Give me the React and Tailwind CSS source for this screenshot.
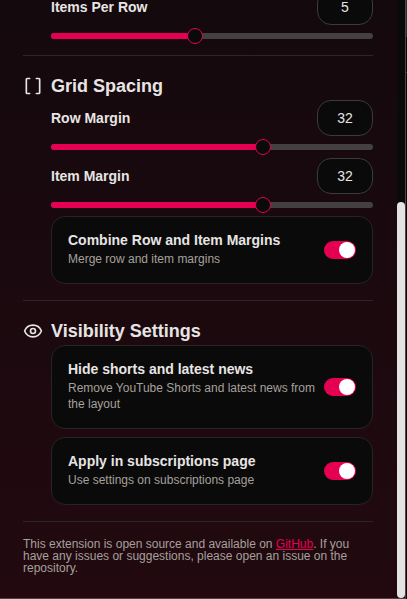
import React from "react";
import { Brackets, Eye } from "lucide-react";

function Separator() {
  return <div className="h-px w-full shrink-0 bg-[#2b2728]" />;
}

function Heading({ icon: Icon, children }) {
  return (
    <div className="flex h-7 items-center gap-2">
      <Icon className="size-5 shrink-0 text-[#e7e5e4]" strokeWidth={2} />
      <h2 className="text-[18px] leading-7 font-bold whitespace-nowrap">{children}</h2>
    </div>
  );
}

function SliderField({ label, value, fill, thumb }) {
  return (
    <div>
      <div className="flex h-9 items-center justify-between">
        <span className="text-[14px] leading-none font-bold">{label}</span>
        <div className="flex h-9 w-14 items-center justify-center rounded-[14px] border border-[#3c3a3a] bg-[#0a0a0a] text-[14px]">
          {value}
        </div>
      </div>
      <div className="relative my-2 h-1.5 rounded-full bg-[#44403f]">
        <div className={`h-full rounded-full bg-[#e60052] ${fill}`} />
        <div className={`absolute -top-[5px] size-4 rounded-full border border-[#e60052] bg-[#0a0a0a] ${thumb}`} />
      </div>
    </div>
  );
}

function ToggleCard({ title, text }) {
  return (
    <div className="flex items-center justify-between gap-2 rounded-[14px] border border-[#262424] bg-[#0a0a0a] p-4">
      <div className="min-w-0 flex-1">
        <div className="mb-1 text-[14px] leading-none font-bold whitespace-nowrap">{title}</div>
        <p className="text-[12px] leading-4 text-[#a6a09b]">{text}</p>
      </div>
      <div className="flex h-[18px] w-8 shrink-0 items-center justify-end rounded-full bg-[#e60052] pr-px">
        <div className="size-4 rounded-full bg-white" />
      </div>
    </div>
  );
}

export default function App() {
  return (
    <div className="flex h-[599px] w-[407px] flex-col overflow-hidden bg-[#0a0a0a] font-['Liberation_Sans',Arial,sans-serif] text-[#e7e5e4]">
      <div className="flex h-[598px] shrink-0">
        <main className="h-full w-[397px] shrink-0 overflow-hidden bg-linear-to-b from-[#14090d] to-[#220910] pr-6 pl-[23px]">
          <div className="-mt-[11px] pl-7">
            <SliderField label="Items Per Row" value="5" fill="w-[144px]" thumb="left-[136px]" />
          </div>
          <div className="mt-4">
            <Separator />
          </div>
          <section className="py-4">
            <Heading icon={Brackets}>Grid Spacing</Heading>
            <div className="pl-7">
              <SliderField label="Row Margin" value="32" fill="w-[212px]" thumb="left-[204px]" />
              <SliderField label="Item Margin" value="32" fill="w-[212px]" thumb="left-[204px]" />
              <ToggleCard title="Combine Row and Item Margins" text="Merge row and item margins" />
            </div>
          </section>
          <Separator />
          <section className="py-4">
            <Heading icon={Eye}>Visibility Settings</Heading>
            <div className="flex flex-col gap-2 pl-7">
              <ToggleCard
                title="Hide shorts and latest news"
                text="Remove YouTube Shorts and latest news from the layout"
              />
              <ToggleCard title="Apply in subscriptions page" text="Use settings on subscriptions page" />
            </div>
          </section>
          <Separator />
          <p className="pt-4 text-[12px] leading-none text-[#a6a09b]">
            This extension is open source and available on{" "}
            <a className="text-[#e60052] underline">GitHub</a>. If you have any issues or suggestions, please open an
            issue on the repository.
          </p>
        </main>
        <div className="flex w-2 shrink-0 flex-col justify-end bg-[#0a0a0a]">
          <div className="h-[396px] rounded-full bg-[#e5e3e2]" />
        </div>
        <div className="w-px shrink-0 bg-[#48484c]" />
        <div className="w-px shrink-0 bg-[#08080c]">
          <div className="h-[37px] bg-[#2e2e3a]" />
          <div className="mt-[35px] h-px bg-[#3a3a40]" />
        </div>
      </div>
      <div className="h-px w-[406px] shrink-0 bg-[#48484c]" />
    </div>
  );
}
